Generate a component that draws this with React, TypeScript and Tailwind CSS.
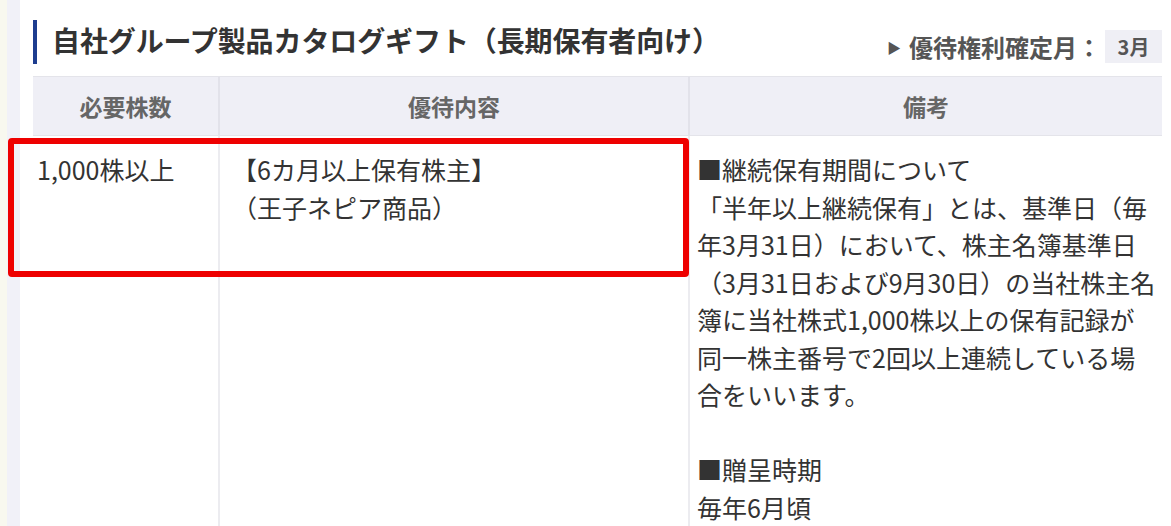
import React from "react";

const font = { fontFamily: '"Noto Sans CJK JP", "Noto Sans", sans-serif' };

export default function App() {
  const notes = [
    "■継続保有期間について",
    "「半年以上継続保有」とは、基準日（毎",
    "年3月31日）において、株主名簿基準日",
    "（3月31日および9月30日）の当社株主名",
    "簿に当社株式1,000株以上の保有記録が",
    "同一株主番号で2回以上連続している場",
    "合をいいます。",
    "\u00a0",
    "■贈呈時期",
    "毎年6月頃",
  ];
  return (
    <div className="relative flex h-[526px] w-[1171px] overflow-hidden bg-white text-[#333]" style={font}>
      <div className="w-[7px] shrink-0 bg-[#f8f8ef]" />
      <div className="w-[13px] shrink-0 bg-[#f1f1f8]" />
      <div className="flex w-[1142px] shrink-0 flex-col pl-[13px]">
        <div className="flex h-[78px] items-start justify-between">
          <div className="mt-[20px] flex items-start">
            <div className="h-[44px] w-[4px] bg-[#1d3d8f]" />
            <h2 className="ml-[15px] text-[28px] font-bold leading-[40px] tracking-[-0.1px] text-[#333]">
              自社グループ製品カタログギフト（長期保有者向け）
            </h2>
          </div>
          <div className="mt-[30px] flex items-center">
            <span className="mr-[8px] text-[14px] leading-none text-[#555]">▶</span>
            <span className="text-[24px] font-bold leading-[33px] text-[#555]">優待権利確定月：</span>
            <span className="ml-[4px] flex h-[33px] w-[57px] items-center justify-center bg-[#efeff5] text-[20px] font-bold text-[#555]">
              3月
            </span>
          </div>
        </div>
        <div className="flex w-[1129px] flex-1 flex-col">
          <div className="flex h-[60px] border-b border-t border-[#e4e4ea] bg-[#efeff6] text-[23px] font-bold text-[#666]">
            <div className="flex w-[187px] items-center justify-center border-r-2 border-[#e2e2ea]">必要株数</div>
            <div className="flex w-[470px] items-center justify-center border-r-2 border-[#e2e2ea]">優待内容</div>
            <div className="flex flex-1 items-center justify-center">備考</div>
          </div>
          <div className="flex flex-1 text-[25px] leading-[37.5px] text-[#333]">
            <div className="w-[187px] border-r-2 border-[#ececf0] pl-[4px] pt-[15px]">1,000株以上</div>
            <div className="w-[470px] border-r-2 border-[#ececf0] pl-[12px] pt-[15px]">
              <div>【6カ月以上保有株主】</div>
              <div>（王子ネピア商品）</div>
            </div>
            <div className="flex-1 pl-[7px] pt-[15px]">
              {notes.map((l, i) => (
                <div key={i} className="whitespace-nowrap">{l}</div>
              ))}
            </div>
          </div>
        </div>
      </div>
      <div className="pointer-events-none absolute left-[8px] top-[138px] h-[139px] w-[681px] rounded-[4px] border-[6px] border-[#ee0000]" />
    </div>
  );
}
